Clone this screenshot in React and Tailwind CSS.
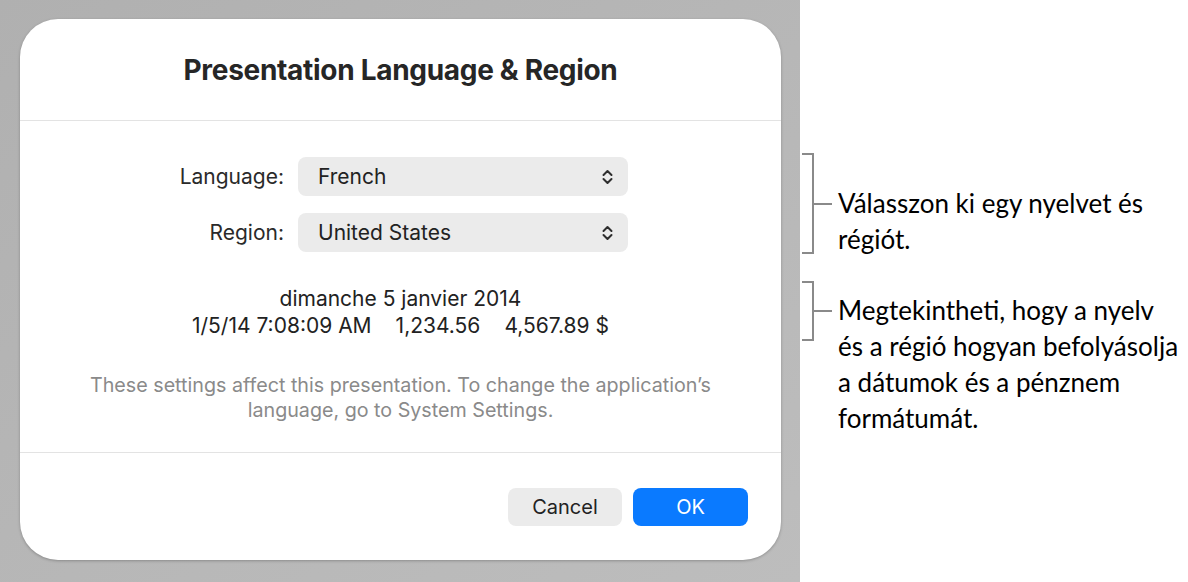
import React from 'react';

const Chevrons = () => (
  <svg width="13" height="18" viewBox="0 0 13 18" fill="none" stroke="#2e2e2e" strokeWidth="2" strokeLinecap="round" strokeLinejoin="round">
    <path d="M2.5 7 L6.5 3 L10.5 7" />
    <path d="M2.5 11 L6.5 15 L10.5 11" />
  </svg>
);

const PopUp = ({ label, value }) => (
  <div className="flex items-center">
    <div className="w-[278px] pr-[14px] text-right text-[21px] text-[#2a2a2a]">{label}</div>
    <div className="w-[330px] h-[39px] rounded-[8px] bg-[#ebebeb] flex items-center justify-between pl-[20px] pr-[14px] text-[21px] text-[#222]">
      <span>{value}</span>
      <Chevrons />
    </div>
  </div>
);

const Bracket = ({ h }) => (
  <div className="flex items-center shrink-0">
    <div className="w-[12px] border-2 border-l-0 border-[#8a8a8a]" style={{ height: h }} />
    <div className="w-[18px] h-[2px] bg-[#8a8a8a]" />
  </div>
);

export default function App() {
  return (
    <div className="w-[1188px] h-[582px] flex bg-white overflow-hidden">
      <div className="w-[800px] h-full bg-gradient-to-br from-[#b0b0b0] to-[#bdbdbd] pt-[19px] pl-[20px]">
        <div className="w-[761px] h-[541px] bg-white rounded-[38px] shadow-[0_1px_3px_rgba(0,0,0,0.25)] flex flex-col font-['Inter',sans-serif]">
          <div className="h-[102px] flex items-center justify-center border-b border-[#e3e3e3]">
            <h1 className="text-[28px] font-bold tracking-[-0.3px] text-[#262626] pt-[1px]">Presentation Language &amp; Region</h1>
          </div>
          <div className="h-[332px] pt-[36px] flex flex-col border-b border-[#e3e3e3]">
            <div className="flex flex-col gap-[17px]">
              <PopUp label="Language:" value="French" />
              <PopUp label="Region:" value="United States" />
            </div>
            <div className="mt-[33px] text-center text-[21px] leading-[27px] text-[#222]">
              <div>dimanche 5 janvier 2014</div>
              <div className="flex justify-center gap-[24px]">
                <span>1/5/14 7:08:09 AM</span>
                <span>1,234.56</span>
                <span>4,567.89 $</span>
              </div>
            </div>
            <div className="mt-[34px] text-center text-[19.7px] leading-[25px] text-[#8a8a8a]">
              <div>These settings affect this presentation. To change the application’s</div>
              <div>language, go to System Settings.</div>
            </div>
          </div>
          <div className="flex-1 flex justify-end items-start gap-[11px] pr-[33px] pt-[35px]">
            <button className="w-[114px] h-[38px] rounded-[8px] bg-[#ebebeb] text-[20px] text-[#222]">Cancel</button>
            <button className="w-[115px] h-[38px] rounded-[8px] bg-[#0a7aff] text-[20px] text-white">OK</button>
          </div>
        </div>
      </div>
      <div className="flex-1 pl-[2px] pt-[153px] font-['Lato',sans-serif] text-[26px] text-black">
        <div className="flex items-start">
          <Bracket h={101} />
          <div className="pl-[6px] leading-[36px] mt-[32px]">
            <div>Válasszon ki egy nyelvet és</div>
            <div>régiót.</div>
          </div>
        </div>
        <div className="flex items-start mt-[24px]">
          <Bracket h={60} />
          <div className="pl-[6px] leading-[36px] mt-[11px]">
            <div>Megtekintheti, hogy a nyelv</div>
            <div>és a régió hogyan befolyásolja</div>
            <div>a dátumok és a pénznem</div>
            <div>formátumát.</div>
          </div>
        </div>
      </div>
    </div>
  );
}
